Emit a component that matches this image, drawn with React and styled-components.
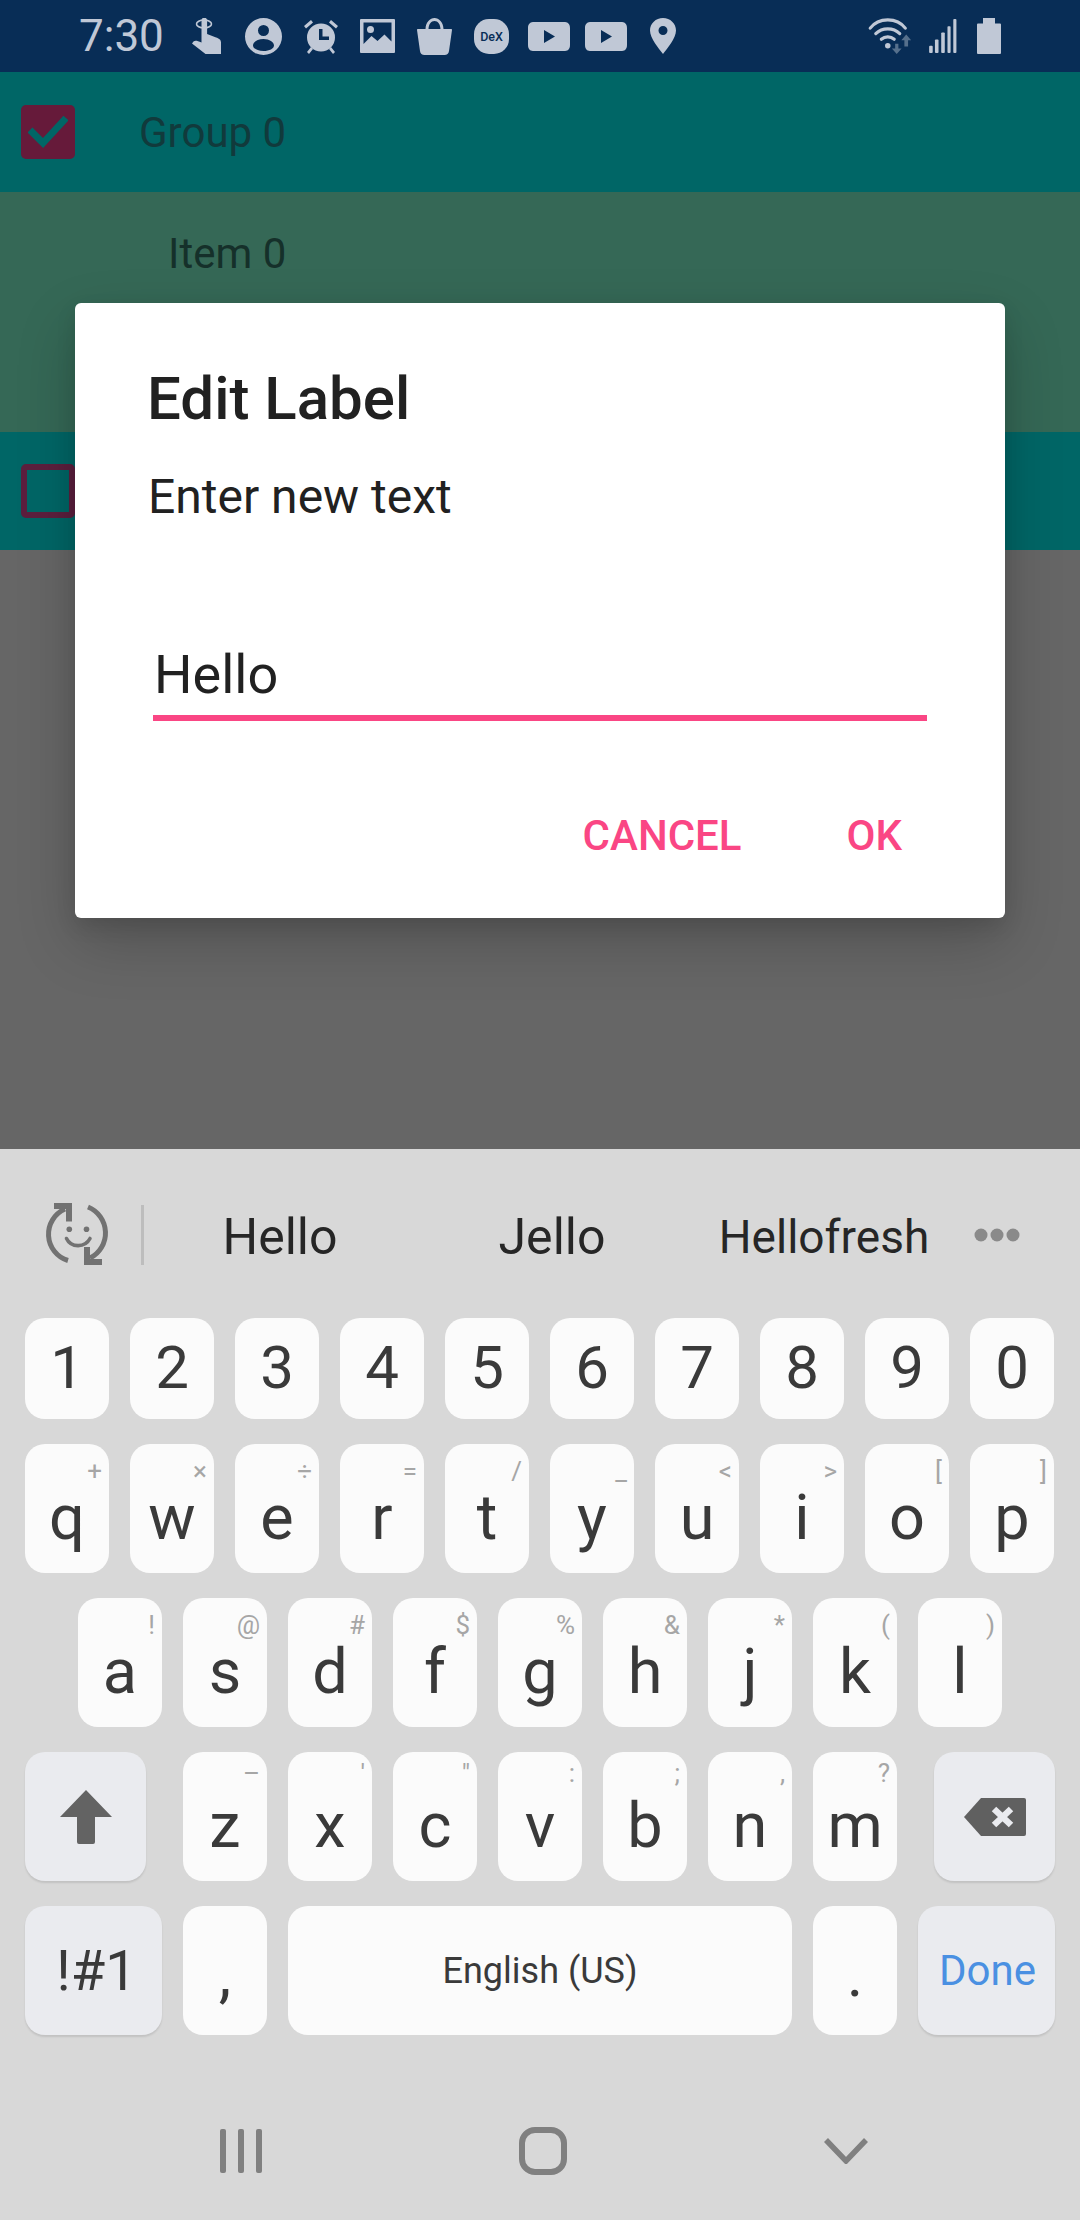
import React from "react";
import styled, { createGlobalStyle } from "styled-components";

const Global = createGlobalStyle`
  html, body { margin: 0; padding: 0; background: #666; }
  #root { width: 1080px; height: 2220px; overflow: hidden; }
  * { box-sizing: border-box; }
  body { font-family: Roboto, "Liberation Sans", sans-serif; }
`;

const PINK = "#fa4684";

const Screen = styled.div`
  width: 1080px;
  height: 2220px;
  display: flex;
  flex-direction: column;
  position: relative;
  overflow: hidden;
`;

const StatusBar = styled.div`
  height: 72px;
  flex: none;
  background: #082d56;
  display: flex;
  align-items: center;
  padding: 0 79px 0 79px;
  color: #c0c8d6;
`;
const Time = styled.div`
  font-size: 44px;
  line-height: 72px;
  width: 99px;
  flex: none;
`;
const Slot = styled.div`
  width: 57px;
  height: 72px;
  flex: none;
  display: flex;
  align-items: center;
  justify-content: center;
`;
const Spacer = styled.div`
  flex: 1;
`;
const StatusRight = styled.div`
  display: flex;
  align-items: center;
  gap: 13px;
`;
const BatterySlot = styled.div`
  margin-left: 6px;
`;

const Content = styled.main`
  flex: 1;
  background: #666;
  position: relative;
`;
const GroupRow = styled.div`
  height: ${(p) => p.$h}px;
  background: #006666;
  display: flex;
  align-items: center;
  padding-left: 21px;
`;
const Check = styled.div`
  width: 54px;
  height: 54px;
  border-radius: 5px;
  flex: none;
  background: ${(p) => (p.$on ? "#661a3a" : "transparent")};
  border: ${(p) => (p.$on ? "none" : "6px solid #5c1f3e")};
  display: flex;
  align-items: center;
  justify-content: center;
`;
const GroupLabel = styled.div`
  margin-left: 64px;
  padding-top: 2px;
  font-size: 42px;
  color: #113a3c;
  line-height: 42px;
`;
const ItemRow = styled.div`
  height: 240px;
  background: #356856;
  padding: 41px 0 0 168px;
  font-size: 42px;
  line-height: 42px;
  color: #15302a;
`;

const Dialog = styled.div`
  position: absolute;
  left: 75px;
  top: 231px;
  width: 930px;
  height: 615px;
  background: #fff;
  border-radius: 6px;
  box-shadow: 0 24px 60px rgba(0, 0, 0, 0.2), 0 8px 20px rgba(0, 0, 0, 0.1);
  padding: 0 0 0 73px;
  color: #212121;
`;
const Title = styled.div`
  font-size: 60px;
  font-weight: 500;
  line-height: 66px;
  padding-top: 63px;
  margin-left: -1px;
  height: 129px;
`;
const Message = styled.div`
  font-size: 48px;
  line-height: 54px;
  margin-top: 38px;
`;
const Field = styled.div`
  width: 774px;
  margin: 121px 0 0 5px;
  height: 76px;
  padding-left: 1px;
  border-bottom: 6px solid ${PINK};
  font-size: 54px;
  line-height: 60px;
  color: #212121;
`;
const Actions = styled.div`
  display: flex;
  justify-content: flex-end;
  align-items: center;
  gap: 105px;
  margin: 91px 103px 0 0;
  font-size: 42px;
  font-weight: 500;
  line-height: 48px;
  color: ${PINK};
`;

const Keyboard = styled.section`
  flex: none;
  height: 1071px;
  background: #d8d8d8;
  padding-top: 55px;
`;
const Suggestions = styled.div`
  height: 62px;
  display: flex;
  align-items: center;
  margin-bottom: 52px;
  padding-left: 45px;
`;
const Divider = styled.div`
  width: 3px;
  height: 60px;
  background: #bdbdbd;
  margin: 0 0 0 30px;
  flex: none;
`;
const Word = styled.div`
  width: 272px;
  text-align: center;
  font-size: ${(p) => p.$size || 46}px;
  line-height: 62px;
  color: #262626;
  flex: none;
  position: relative;
  top: 2px;
`;
const DotsSlot = styled.div`
  margin-left: 14px;
  flex: none;
`;
const Rows = styled.div`
  display: flex;
  flex-direction: column;
  gap: 25px;
  padding: 0 25px;
`;
const Row = styled.div`
  display: flex;
  gap: 21px;
  padding-left: ${(p) => p.$indent || 0}px;
`;
const Key = styled.div`
  position: relative;
  flex: none;
  width: ${(p) => p.$w || 84}px;
  height: ${(p) => p.$h || 129}px;
  border-radius: 20px;
  background: ${(p) => (p.$fn ? "#eaebef" : "#fbfbfb")};
  box-shadow: ${(p) => (p.$fn ? "0 2px 2px rgba(0,0,0,.1)" : "none")};
  display: flex;
  justify-content: center;
  align-items: ${(p) => (p.$center ? "center" : "flex-start")};
  padding-top: ${(p) => (p.$center ? 0 : p.$top ?? 44)}px;
  padding-left: ${(p) => p.$pl || 0}px;
  margin-left: ${(p) => p.$ml || 0}px;
  margin-right: ${(p) => p.$mr || 0}px;
  font-size: ${(p) => p.$size || 63}px;
  line-height: ${(p) => (p.$center ? "normal" : "60px")};
  color: ${(p) => p.$color || "#3a3a3a"};
`;
const Hint = styled.span`
  position: absolute;
  top: ${(p) => p.$top ?? 12}px;
  right: 7px;
  font-size: 26px;
  line-height: 30px;
  color: #a6a6a6;
`;
const NavBar = styled.nav`
  margin-top: 47px;
  height: 138px;
  display: flex;
  align-items: center;
`;
const NavSlot = styled.div`
  width: ${(p) => p.$w}px;
  flex: none;
  display: flex;
  justify-content: center;
`;

const Ico = ({ w, h, vb, children }) => (
  <svg width={w} height={h} viewBox={vb || `0 0 ${w} ${h}`} fill="currentColor" style={{ display: "block" }}>
    {children}
  </svg>
);

const TouchIcon = () => (
  <Ico w={30} h={36}>
    <ellipse cx="12" cy="6" rx="7.500" ry="4" fill="none" stroke="currentColor" strokeWidth="1.600" />
    <path d="M9.500 2.500a2.800 2.800 0 0 1 5.600 0V16l9 3.500c2.500.8 4.900 2 4.900 5V36H13.500L0 25.500 1.500 23.500c1.500-1.200 3.500-1 8 1z" />
  </Ico>
);
const PersonIcon = () => (
  <Ico w={37} h={37}>
    <path
      fillRule="evenodd"
      d="M18.500 0a18.500 18.500 0 1 1 0 37a18.500 18.500 0 1 1 0-37zM18.500 7a5.500 5.500 0 1 0 0 11a5.500 5.500 0 1 0 0-11zM18.500 21c-6 0-10.500 3-10.500 6.500c0 3 4.500 5.500 10.500 5.500s10.500-2.500 10.500-5.500c0-3.500-4.500-6.500-10.500-6.500z"
    />
  </Ico>
);
const AlarmIcon = () => (
  <Ico w={36} h={35}>
    <path fillRule="evenodd" d="M18 4.500a14 14 0 1 1 0 28a14 14 0 1 1 0-28zM16 10v11h10v-3.500h-6.500V10z" />
    <path d="M1 7L8 1l2 2.500-7 6zM35 7l-7-6-2 2.500 7 6zM4 33l4-5 2 2-4 5zM32 33l-4-5-2 2 4 5z" />
  </Ico>
);
const ImageIcon = () => (
  <Ico w={35} h={34}>
    <path
      fillRule="evenodd"
      d="M1 0h33a1 1 0 0 1 1 1v32a1 1 0 0 1-1 1H1a1 1 0 0 1-1-1V1a1 1 0 0 1 1-1zM3.500 3.500V25l8-8 6 5 7-6.500 7 7V3.500zM10.500 7a3.500 3.500 0 1 0 0 7a3.500 3.500 0 1 0 0-7z"
    />
  </Ico>
);
const BagIcon = () => (
  <Ico w={35} h={37}>
    <path
      fillRule="evenodd"
      d="M1 11h7.500C8.800 4 13 0 17.500 0S26.200 4 26.500 11H34c.8 0 1 .5 1 1L32 33c-.3 2.500-2 4-4.500 4h-20C5 37 3.300 35.500 3 33L0 12c0-.5.200-1 1-1zM11.500 11h12C23.200 6 21 3 17.500 3s-5.700 3-6 8z"
    />
  </Ico>
);
const DexBadge = styled.div`
  width: 35px;
  height: 35px;
  border-radius: 15px;
  background: #c0c8d6;
  color: #082d56;
  font-size: 12.500px;
  font-weight: 500;
  line-height: 35px;
  text-align: center;
`;
const PlayIcon = () => (
  <Ico w={42} h={29}>
    <path
      fillRule="evenodd"
      d="M6 0h30c3 0 6 1 6 6v17c0 5-3 6-6 6H6c-3 0-6-1-6-6V6c0-5 3-6 6-6zM16 8v13l11-6.500z"
    />
  </Ico>
);
const PinIcon = () => (
  <Ico w={26} h={36}>
    <path
      fillRule="evenodd"
      d="M13 0c7.200 0 13 5.500 13 12.500C26 20 17 31 13 36 9 31 0 20 0 12.500 0 5.500 5.800 0 13 0zM13 8a4.500 4.500 0 1 0 0 9a4.500 4.500 0 1 0 0-9z"
    />
  </Ico>
);
const WifiIcon = () => (
  <Ico w={48} h={36} vb="0 0 49 39">
    <g fill="none" stroke="currentColor" strokeWidth="3.400" strokeLinecap="round">
      <path d="M2 11C11 -1 31 -1 40 11" />
      <path d="M8 17c7-7 19-7 26 0" />
      <path d="M14 23c4-3.500 10-3.500 14 0" />
    </g>
    <circle cx="21" cy="30" r="3" />
    <path d="M29 28h3.500v5H36l-5.300 6-5.300-6H29zM41 18l5.300 6H43v7h-4v-7h-3.300z" fill="#56708c" />
  </Ico>
);
const SignalIcon = () => (
  <Ico w={30} h={34} vb="0 0 31 38">
    <rect x="0" y="30" width="4" height="8" rx="1" />
    <rect x="6.500" y="23" width="4" height="15" rx="1" />
    <rect x="13.500" y="15" width="4" height="23" rx="1" />
    <rect x="20.500" y="8" width="3.500" height="30" rx="1" />
    <rect x="27" y="0" width="3.500" height="38" rx="1" />
  </Ico>
);
const BatteryIcon = () => (
  <Ico w={24} h={36}>
    <path d="M6 0h12v5.500h5a1 1 0 0 1 1 1V35a1 1 0 0 1-1 1H1a1 1 0 0 1-1-1V6.500a1 1 0 0 1 1-1h5z" />
  </Ico>
);

const EmojiIcon = () => (
  <svg width="66" height="66" viewBox="15 13 66 66" fill="none" stroke="#727272" strokeWidth="5" style={{ flex: "none", display: "block" }}>
    <path d="M38 71.500A27.500 27.500 0 0 1 35 20" />
    <path d="M24 17h15v15.500" strokeWidth="6" />
    <path d="M58 18A28 28 0 0 1 60 69" />
    <path d="M72 73H57V58" strokeWidth="6" />
    <circle cx="39.300" cy="40.300" r="2.800" fill="#727272" stroke="none" />
    <circle cx="56.500" cy="40.300" r="2.800" fill="#727272" stroke="none" />
    <path d="M36.500 49.500C41 59 55 59 60 49.500" strokeWidth="3.600" strokeLinecap="round" />
  </svg>
);
const DotsIcon = () => (
  <svg width="46" height="14" viewBox="0 0 46 14" fill="#8a8a8a" style={{ display: "block" }}>
    <circle cx="7" cy="7" r="6.500" />
    <circle cx="23" cy="7" r="6.500" />
    <circle cx="39" cy="7" r="6.500" />
  </svg>
);
const ShiftIcon = () => (
  <svg width="52" height="54" viewBox="0 0 52 54" fill="#636363" style={{ display: "block" }}>
    <path d="M26 0L52 27H35V52a2 2 0 0 1-2 2H19a2 2 0 0 1-2-2V27H0z" />
  </svg>
);
const BackspaceIcon = () => (
  <svg width="62" height="38" viewBox="0 0 62 38" style={{ display: "block" }}>
    <path d="M17 0H60a2 2 0 0 1 2 2V36a2 2 0 0 1-2 2H17L0 19z" fill="#606060" />
    <path d="M30 11L47 27M47 11L30 27" stroke="#eaebef" strokeWidth="6.500" fill="none" />
  </svg>
);
const RecentsIcon = () => (
  <svg width="42" height="44" viewBox="0 0 42 44" fill="#808080" style={{ display: "block" }}>
    <rect x="0" y="0" width="6" height="44" rx="2" />
    <rect x="18" y="0" width="6" height="44" rx="2" />
    <rect x="36" y="0" width="6" height="44" rx="2" />
  </svg>
);
const HomeIcon = () => (
  <svg width="48" height="48" viewBox="0 0 48 48" fill="none" stroke="#808080" strokeWidth="6" style={{ display: "block" }}>
    <rect x="3" y="3" width="42" height="42" rx="13" />
  </svg>
);
const BackIcon = () => (
  <svg width="44" height="26" viewBox="0 0 44 26" fill="none" stroke="#808080" strokeWidth="5.500" style={{ display: "block" }}>
    <path d="M2 2L22 23L42 2" />
  </svg>
);

const digits = "1234567890".split("");
const row2 = [["q", "+"], ["w", "×"], ["e", "÷"], ["r", "="], ["t", "/"], ["y", "_"], ["u", "<"], ["i", ">"], ["o", "["], ["p", "]"]];
const row3 = [["a", "!"], ["s", "@"], ["d", "#"], ["f", "$"], ["g", "%"], ["h", "&"], ["j", "*"], ["k", "("], ["l", ")"]];
const row4 = [["z", "–"], ["x", "'"], ["c", '"'], ["v", ":"], ["b", ";"], ["n", ","], ["m", "?"]];

const LetterKey = ({ k, hint, small }) => (
  <Key>
    {k}
    <Hint $top={small ? 6 : 12}>{hint}</Hint>
  </Key>
);

export default function App() {
  return (
    <Screen>
      <Global />
      <StatusBar>
        <Time>7:30</Time>
        <Slot><TouchIcon /></Slot>
        <Slot><PersonIcon /></Slot>
        <Slot><AlarmIcon /></Slot>
        <Slot><ImageIcon /></Slot>
        <Slot><BagIcon /></Slot>
        <Slot><DexBadge>DeX</DexBadge></Slot>
        <Slot><PlayIcon /></Slot>
        <Slot><PlayIcon /></Slot>
        <Slot><PinIcon /></Slot>
        <Spacer />
        <StatusRight>
          <WifiIcon />
          <SignalIcon />
          <BatterySlot><BatteryIcon /></BatterySlot>
        </StatusRight>
      </StatusBar>
      <Content>
        <GroupRow $h={120}>
          <Check $on>
            <svg width="40" height="34" viewBox="0 0 40 34" fill="none" stroke="#006666" strokeWidth="7">
              <path d="M2 15L15 28L38 3" />
            </svg>
          </Check>
          <GroupLabel>Group 0</GroupLabel>
        </GroupRow>
        <ItemRow>Item 0</ItemRow>
        <GroupRow $h={118}>
          <Check />
        </GroupRow>
        <Dialog>
          <Title>Edit Label</Title>
          <Message>Enter new text</Message>
          <Field>Hello</Field>
          <Actions>
            <span>CANCEL</span>
            <span>OK</span>
          </Actions>
        </Dialog>
      </Content>
      <Keyboard>
        <Suggestions>
          <EmojiIcon />
          <Divider />
          <Word $size={50}>Hello</Word>
          <Word $size={50}>Jello</Word>
          <Word>Hellofresh</Word>
          <DotsSlot><DotsIcon /></DotsSlot>
        </Suggestions>
        <Rows>
          <Row>
            {digits.map((d) => (
              <Key key={d} $h={101} $top={20} $size={60}>{d}</Key>
            ))}
          </Row>
          <Row>
            {row2.map(([k, h]) => (
              <LetterKey key={k} k={k} hint={h} />
            ))}
          </Row>
          <Row $indent={53}>
            {row3.map(([k, h]) => (
              <LetterKey key={k} k={k} hint={h} />
            ))}
          </Row>
          <Row>
            <Key $fn $center $w={121} $mr={16}><ShiftIcon /></Key>
            {row4.map(([k, h]) => (
              <LetterKey key={k} k={k} hint={h} small />
            ))}
            <Key $fn $center $w={121} $ml={16}>
              <BackspaceIcon />
            </Key>
          </Row>
          <Row>
            <Key $fn $center $w={137} $size={56} $pl={6}>!#1</Key>
            <Key $top={39}>,</Key>
            <Key $center $w={504} $size={36}>English (US)</Key>
            <Key $top={39}>.</Key>
            <Key $fn $center $w={137} $size={42} $pl={2} $color="#4a90e2">Done</Key>
          </Row>
        </Rows>
        <NavBar>
          <NavSlot $w={482}><RecentsIcon /></NavSlot>
          <NavSlot $w={122}><HomeIcon /></NavSlot>
          <NavSlot $w={484}><BackIcon /></NavSlot>
        </NavBar>
      </Keyboard>
    </Screen>
  );
}
